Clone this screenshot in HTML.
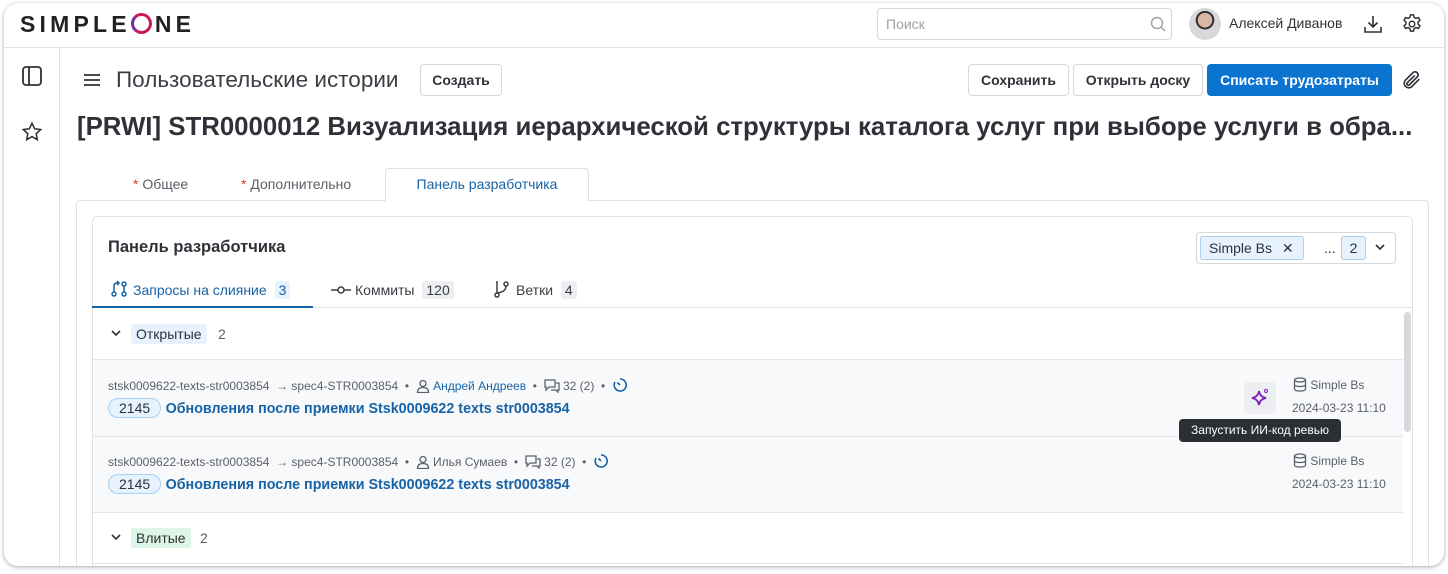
<!DOCTYPE html>
<html><head><meta charset="utf-8"><style>
*{box-sizing:border-box;margin:0;padding:0}
body{width:1448px;height:574px;background:#fff;font-family:"Liberation Sans","DejaVu Sans",sans-serif;color:#2e3238;position:relative;overflow:hidden}
.a{position:absolute;white-space:nowrap}
.frame{position:absolute;left:4px;top:3px;width:1440px;height:563px;border-radius:14px;background:#fff;box-shadow:0 1px 4px rgba(0,0,0,.35);overflow:hidden}
.inner{position:absolute;left:-4px;top:-3px;width:1448px;height:574px}
.btn{position:absolute;height:32px;border:1px solid #d5d8dd;border-radius:4px;background:#fff;font-size:14px;font-weight:bold;color:#2e3238;display:flex;align-items:center;justify-content:center}
.badge{display:inline-block;background:#eceef1;border-radius:3px;padding:1px 4px;margin-left:4px;color:#3a3f45}
.row{position:absolute;left:93px;width:1310px;background:#f8f9fa;border-top:1px solid #e3e5e8}
.meta{font-size:12px;color:#5b6068}
.meta svg{vertical-align:-3px}
.link{color:#1763a6}
.pill{display:inline-block;border:1px solid #a9cff2;background:#e6f2fd;border-radius:12px;padding:1px 10px;font-size:14px;color:#2e3238}
</style></head><body>
<div class="frame"><div class="inner">
<!-- header -->
<div class="a" style="left:20px;top:11px;font-size:23px;font-weight:bold;letter-spacing:4.2px;color:#222">SIMPLE<span style="display:inline-block;width:21px;height:21px;border:3.5px solid #c8185e;border-left-color:#7a2a9a;border-radius:50%;vertical-align:-2px;margin:0 3px 0 0"></span>NE</div>
<div class="a" style="left:877px;top:8px;width:295px;height:32px;border:1px solid #d5d8dd;border-radius:4px;font-size:14px;color:#9aa0a8;padding:7px 8px">Поиск</div>
<svg class="a" style="left:1150px;top:16px" width="16" height="16" viewBox="0 0 16 16"><circle cx="7" cy="7" r="5.5" fill="none" stroke="#9aa0a8" stroke-width="1.4"/><path d="M11 11l4 4" stroke="#9aa0a8" stroke-width="1.4"/></svg>
<div class="a" style="left:1189px;top:8px;width:32px;height:32px;border-radius:50%;background:radial-gradient(circle at 50% 38%,#d8b8a5 0 28%,#333 29% 36%,#d8d8da 37%)"></div>
<div class="a" style="left:1229px;top:15px;font-size:14px">Алексей Диванов</div>
<svg class="a" style="left:1363px;top:14px" width="20" height="20" viewBox="0 0 20 20" fill="none" stroke="#2e3238" stroke-width="1.6"><path d="M10 2v11M5.5 8.5L10 13l4.5-4.5M2 13v5h16v-5"/></svg>
<svg class="a" style="left:1401px;top:13px" width="22" height="22" viewBox="0 0 24 24" fill="none" stroke="#2e3238" stroke-width="1.6"><circle cx="12" cy="12" r="3"/><path d="M10.3 2h3.4l.6 2.8 2 1.1 2.7-1 1.7 2.9-2.1 1.9v2.4l2.1 1.9-1.7 2.9-2.7-1-2 1.1-.6 2.8h-3.4l-.6-2.8-2-1.1-2.7 1-1.7-2.9 2.1-1.9v-2.4L3.3 7.8 5 4.9l2.7 1 2-1.1z"/></svg>
<div class="a" style="left:4px;top:47px;width:1440px;height:1px;background:#dfe1e4"></div>
<div class="a" style="left:59px;top:48px;width:1px;height:520px;background:#dfe1e4"></div>
<svg class="a" style="left:21px;top:65px" width="22" height="22" viewBox="0 0 22 22" fill="none" stroke="#2e3238" stroke-width="1.8"><rect x="2" y="2" width="18" height="18" rx="3"/><path d="M8 2v18"/></svg>
<svg class="a" style="left:21px;top:121px" width="22" height="22" viewBox="0 0 24 24" fill="none" stroke="#2e3238" stroke-width="1.7"><path d="M12 2.5l2.9 6 6.5.8-4.8 4.5 1.2 6.5L12 17.1l-5.8 3.2 1.2-6.5L2.6 9.3l6.5-.8z"/></svg>
<!-- toolbar -->
<svg class="a" style="left:83px;top:72px" width="18" height="16" viewBox="0 0 18 16" stroke="#2e3238" stroke-width="1.8"><path d="M1 3h16M1 8h16M1 13h16"/></svg>
<div class="a" style="left:116px;top:67px;font-size:22.5px;color:#3a3f45">Пользовательские истории</div>
<div class="btn" style="left:420px;top:64px;width:82px">Создать</div>
<div class="btn" style="left:968px;top:64px;width:101px">Сохранить</div>
<div class="btn" style="left:1073px;top:64px;width:130px">Открыть доску</div>
<div class="btn" style="left:1207px;top:64px;width:185px;background:#0a74d0;border-color:#0a74d0;color:#fff">Списать трудозатраты</div>
<svg class="a" style="left:1401px;top:69px" width="22" height="22" viewBox="0 0 24 24" fill="none" stroke="#2e3238" stroke-width="1.8"><path d="M20 11l-8.5 8.5a5 5 0 01-7-7L13 4a3.3 3.3 0 014.7 4.7l-8.5 8.5a1.6 1.6 0 01-2.3-2.3L15 7"/></svg>
<div class="a" style="left:77px;top:113px;font-size:25.8px;font-weight:bold;color:#2e3238;width:1345px;overflow:hidden">[PRWI] STR0000012 Визуализация иерархической структуры каталога услуг при выборе услуги в обра...</div>
<!-- tabs -->
<div class="a" style="left:133px;top:176px;font-size:14px;color:#5b6068"><span style="color:#d4382c">*</span> Общее</div>
<div class="a" style="left:241px;top:176px;font-size:14px;color:#5b6068"><span style="color:#d4382c">*</span> Дополнительно</div>
<div class="a" style="left:76px;top:200px;width:1353px;height:380px;border:1px solid #dfe1e4;border-radius:4px"></div>
<div class="a" style="left:385px;top:168px;width:204px;height:34px;border:1px solid #dfe1e4;border-bottom:none;background:#fff;border-radius:4px 4px 0 0;font-size:14px;color:#1763a6;text-align:center;padding-top:7px">Панель разработчика</div>
<!-- inner card -->
<div class="a" style="left:92px;top:216px;width:1321px;height:370px;border:1px solid #dfe1e4;border-radius:6px"></div>
<div class="a" style="left:108px;top:238px;font-size:16.5px;font-weight:bold;color:#2e3238">Панель разработчика</div>
<div class="a" style="left:1196px;top:232px;width:200px;height:32px;border:1px solid #d5d8dd;border-radius:4px"></div>
<div class="a" style="left:1200px;top:236px;width:104px;height:24px;background:#e6f2fd;border:1px solid #a9cff2;border-radius:3px;font-size:14px;padding:3px 8px">Simple Bs <span style="margin-left:6px">✕</span></div>
<div class="a" style="left:1324px;top:240px;font-size:14px">...</div>
<div class="a" style="left:1341px;top:236px;width:25px;height:24px;background:#e6f2fd;border:1px solid #a9cff2;border-radius:3px;font-size:14px;text-align:center;padding-top:3px">2</div>
<svg class="a" style="left:1374px;top:243px" width="12" height="8" viewBox="0 0 12 8" fill="none" stroke="#2e3238" stroke-width="1.6"><path d="M2 2l4 4 4-4"/></svg>
<!-- subtabs -->
<svg class="a" style="left:110px;top:280px" width="18" height="18" viewBox="0 0 18 18" fill="none" stroke="#1763a6" stroke-width="1.5"><circle cx="4" cy="14" r="2"/><circle cx="14" cy="14" r="2"/><circle cx="14" cy="4" r="2"/><path d="M4 12V6q0-3 3-3h2M7 1l2 2-2 2M14 6v6"/></svg>
<div class="a" style="left:133px;top:281px;font-size:14px;color:#1763a6">Запросы на слияние <span class="badge" style="background:#e6f2fd;color:#1763a6">3</span></div>
<div class="a" style="left:92px;top:306px;width:221px;height:2px;background:#1763a6"></div>
<div class="a" style="left:313px;top:307px;width:1100px;height:1px;background:#dfe1e4"></div>
<svg class="a" style="left:331px;top:283px" width="20" height="14" viewBox="0 0 20 14" fill="none" stroke="#3a3f45" stroke-width="1.5"><circle cx="10" cy="7" r="3"/><path d="M0 7h7M13 7h7"/></svg>
<div class="a" style="left:355px;top:281px;font-size:14px;color:#3a3f45">Коммиты <span class="badge">120</span></div>
<svg class="a" style="left:493px;top:280px" width="18" height="18" viewBox="0 0 18 18" fill="none" stroke="#3a3f45" stroke-width="1.5"><circle cx="4" cy="15" r="2"/><circle cx="13" cy="4" r="2"/><path d="M4 1v12M13 6q0 6-9 7"/></svg>
<div class="a" style="left:516px;top:281px;font-size:14px;color:#3a3f45">Ветки <span class="badge">4</span></div>
<!-- open group -->
<svg class="a" style="left:110px;top:329px" width="12" height="8" viewBox="0 0 12 8" fill="none" stroke="#2e3238" stroke-width="1.6"><path d="M2 2l4 4 4-4"/></svg>
<div class="a" style="left:131px;top:324px;background:#e6f2fd;border-radius:3px;padding:2px 5px;font-size:14px">Открытые</div>
<div class="a" style="left:218px;top:326px;font-size:14px;color:#5b6068">2</div>
<div class="row" style="top:359px;height:77px"></div>
<div class="row" style="top:436px;height:77px"></div>
<div class="a" style="left:93px;top:512px;width:1310px;height:1px;background:#e3e5e8"></div>
<div class="a" style="left:93px;top:563px;width:1310px;height:1px;background:#e3e5e8"></div>
<div class="a meta" style="left:108px;top:377px">stsk0009622-texts-str0003854 &nbsp;→ spec4-STR0003854 &nbsp;• &nbsp;<svg width="14" height="14" viewBox="0 0 14 14" fill="none" stroke="#5b6068" stroke-width="1.3"><circle cx="7" cy="4.5" r="3"/><path d="M1.5 13.5q0-5 5.5-5t5.5 5z"/></svg> <span class="link">Андрей Андреев</span> &nbsp;• &nbsp;<svg width="16" height="14" viewBox="0 0 16 14" fill="none" stroke="#5b6068" stroke-width="1.3"><path d="M1 1h10v7H5l-3 3V8H1zM12 4h3v7h-1v2l-2-2H7"/></svg> 32 (2) &nbsp;• &nbsp;<svg width="16" height="16" viewBox="0 0 16 16" fill="none" stroke="#1763a6" stroke-width="1.6"><path d="M8 2a6 6 0 11-5 3M8 8L5.5 5.5"/></svg></div>
<div class="a" style="left:108px;top:398px"><span class="pill">2145</span> <span class="link" style="font-size:14.3px;font-weight:bold">Обновления после приемки Stsk0009622 texts str0003854</span></div>
<div class="a meta" style="left:108px;top:453px">stsk0009622-texts-str0003854 &nbsp;→ spec4-STR0003854 &nbsp;• &nbsp;<svg width="14" height="14" viewBox="0 0 14 14" fill="none" stroke="#5b6068" stroke-width="1.3"><circle cx="7" cy="4.5" r="3"/><path d="M1.5 13.5q0-5 5.5-5t5.5 5z"/></svg> Илья Сумаев &nbsp;• &nbsp;<svg width="16" height="14" viewBox="0 0 16 14" fill="none" stroke="#5b6068" stroke-width="1.3"><path d="M1 1h10v7H5l-3 3V8H1zM12 4h3v7h-1v2l-2-2H7"/></svg> 32 (2) &nbsp;• &nbsp;<svg width="16" height="16" viewBox="0 0 16 16" fill="none" stroke="#1763a6" stroke-width="1.6"><path d="M8 2a6 6 0 11-5 3M8 8L5.5 5.5"/></svg></div>
<div class="a" style="left:108px;top:474px"><span class="pill">2145</span> <span class="link" style="font-size:14.3px;font-weight:bold">Обновления после приемки Stsk0009622 texts str0003854</span></div>
<div class="a meta" style="left:1293px;top:377px"><svg width="14" height="15" viewBox="0 0 14 15" fill="none" stroke="#5b6068" stroke-width="1.3"><ellipse cx="7" cy="3" rx="5.5" ry="2"/><path d="M1.5 3v9q0 2 5.5 2t5.5-2V3M1.5 7.5q0 2 5.5 2t5.5-2"/></svg> Simple Bs</div>
<div class="a meta" style="left:1292px;top:401px">2024-03-23 11:10</div>
<div class="a meta" style="left:1293px;top:453px"><svg width="14" height="15" viewBox="0 0 14 15" fill="none" stroke="#5b6068" stroke-width="1.3"><ellipse cx="7" cy="3" rx="5.5" ry="2"/><path d="M1.5 3v9q0 2 5.5 2t5.5-2V3M1.5 7.5q0 2 5.5 2t5.5-2"/></svg> Simple Bs</div>
<div class="a meta" style="left:1292px;top:477px">2024-03-23 11:10</div>
<div class="a" style="left:1244px;top:382px;width:32px;height:32px;background:#eceef1;border-radius:4px"></div>
<svg class="a" style="left:1250px;top:388px" width="20" height="20" viewBox="0 0 20 20"><path d="M9 3q1 6 7 7q-6 1-7 7q-1-6-7-7q6-1 7-7z" fill="none" stroke="#7b1fc2" stroke-width="1.8"/><circle cx="16" cy="3" r="1.5" fill="none" stroke="#7b1fc2"/></svg>
<div class="a" style="left:1179px;top:419px;width:162px;height:23px;background:#2b2e33;border-radius:4px;color:#fff;font-size:12px;text-align:center;padding-top:4px">Запустить ИИ-код ревью</div>
<div class="a" style="left:1404px;top:312px;width:7px;height:120px;background:#d5d8dc;border-radius:4px"></div>
<!-- merged group -->
<svg class="a" style="left:110px;top:533px" width="12" height="8" viewBox="0 0 12 8" fill="none" stroke="#2e3238" stroke-width="1.6"><path d="M2 2l4 4 4-4"/></svg>
<div class="a" style="left:131px;top:528px;background:#ddf5e6;border-radius:3px;padding:2px 5px;font-size:14px">Влитые</div>
<div class="a" style="left:200px;top:530px;font-size:14px;color:#5b6068">2</div>
</div></div>
</body></html>
